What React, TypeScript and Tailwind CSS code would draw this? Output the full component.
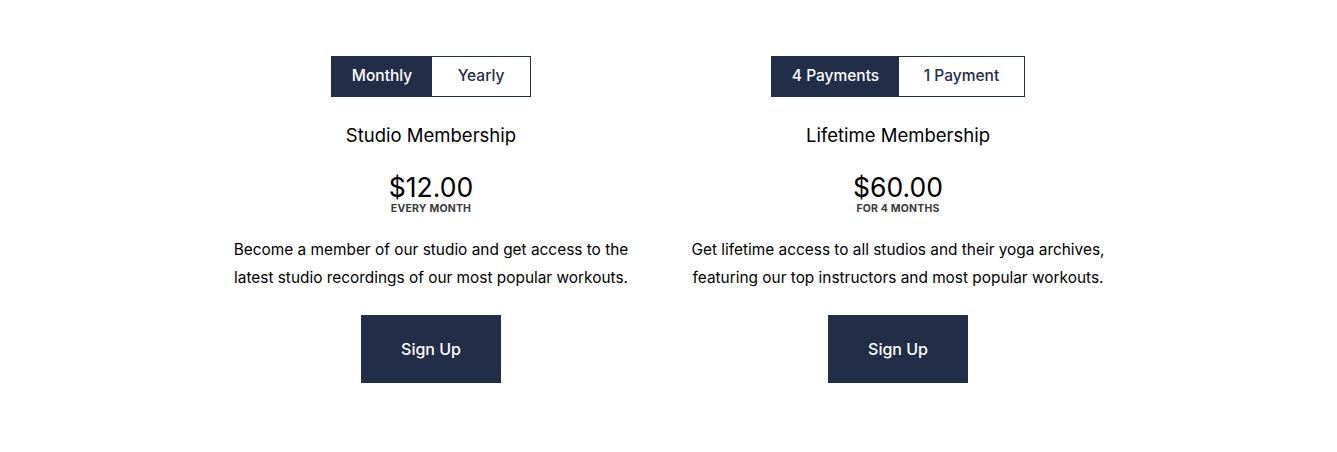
import React from "react";

const font = { fontFamily: "Inter, 'Noto Sans', sans-serif" };

function Plan(props: {
  left: string;
  right: string;
  leftW: string;
  rightW: string;
  title: string;
  price: string;
  period: string;
  desc: React.ReactNode;
}) {
  return (
    <div className="flex w-[440px] flex-col items-center">
      <div className="flex h-[41px] border border-[#222d48]">
        <button className={`${props.leftW} bg-[#222d48] pb-[1px] text-[15.5px] font-medium text-white`}>
          {props.left}
        </button>
        <button className={`${props.rightW} bg-white pb-[1px] text-[15.5px] font-medium text-[#222d48]`}>
          {props.right}
        </button>
      </div>
      <h2 className="mt-[25px] text-[18.5px] leading-[26px] text-black">{props.title}</h2>
      <div className="mt-[24px] text-[26.5px] leading-[30px] text-black">{props.price}</div>
      <div className="mt-[1px] text-[10.5px] font-bold leading-[12px] tracking-[0.2px] text-[#3a3a3a]">
        {props.period}
      </div>
      <p className="mt-[21px] text-center text-[15.4px] leading-[28px] text-black">{props.desc}</p>
      <button className="mt-[23px] h-[68px] w-[140px] bg-[#222d48] text-[16px] font-medium text-white">
        Sign Up
      </button>
    </div>
  );
}

export default function App() {
  return (
    <div className="min-h-[452px] w-full bg-white" style={font}>
      <div className="flex justify-center gap-[27px] pr-[8px] pt-[56px]">
        <Plan
          left="Monthly"
          right="Yearly"
          leftW="w-[100px]"
          rightW="w-[98px]"
          title="Studio Membership"
          price="$12.00"
          period="EVERY MONTH"
          desc={
            <>
              Become a member of our studio and get access to the
              <br />
              latest studio recordings of our most popular workouts.
            </>
          }
        />
        <Plan
          left="4 Payments"
          right="1 Payment"
          leftW="w-[127px]"
          rightW="w-[125px]"
          title="Lifetime Membership"
          price="$60.00"
          period="FOR 4 MONTHS"
          desc={
            <>
              Get lifetime access to all studios and their yoga archives,
              <br />
              featuring our top instructors and most popular workouts.
            </>
          }
        />
      </div>
    </div>
  );
}
